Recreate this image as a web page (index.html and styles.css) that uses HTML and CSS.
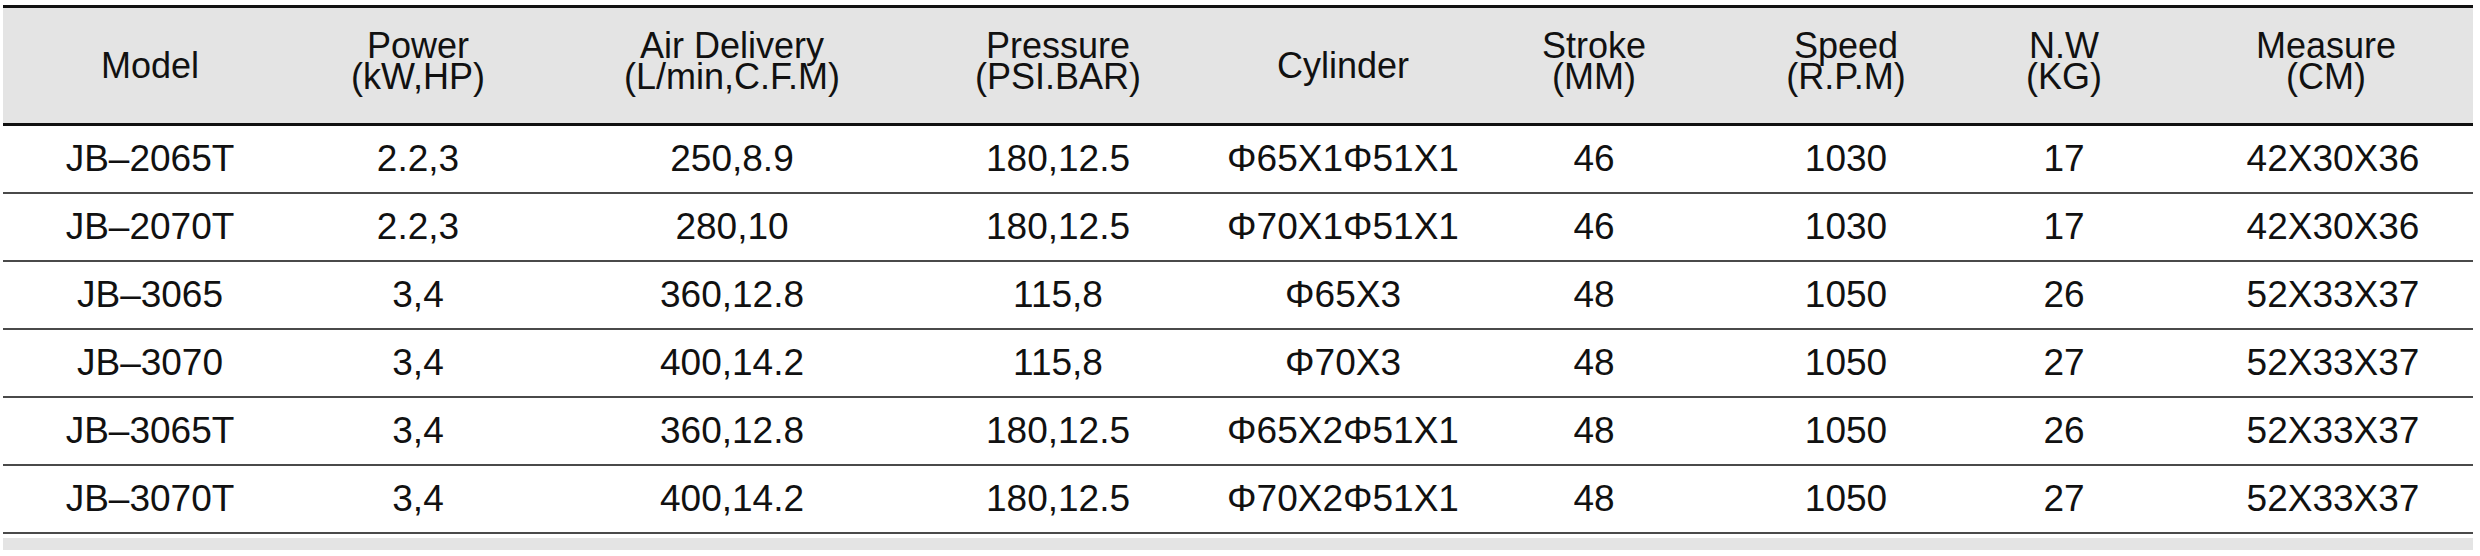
FILE: index.html
```html
<!DOCTYPE html>
<html lang="en">
<head>
<meta charset="utf-8">
<title>Compressor specifications</title>
<link rel="stylesheet" href="styles.css">
</head>
<body>
<div class="sheet">
  <table class="spec">
    <colgroup>
      <col class="c-model"><col class="c-power"><col class="c-air"><col class="c-pres"><col class="c-cyl"><col class="c-stroke"><col class="c-speed"><col class="c-nw"><col class="c-meas">
    </colgroup>
    <thead>
      <tr>
        <th>Model</th>
        <th class="two">Power<br>(kW,HP)</th>
        <th class="two">Air Delivery<br>(L/min,C.F.M)</th>
        <th class="two">Pressure<br>(PSI.BAR)</th>
        <th>Cylinder</th>
        <th class="two">Stroke<br>(MM)</th>
        <th class="two">Speed<br>(R.P.M)</th>
        <th class="two">N.W<br>(KG)</th>
        <th class="two last-h">Measure<br>(CM)</th>
      </tr>
    </thead>
    <tbody>
      <tr><td>JB–2065T</td><td>2.2,3</td><td>250,8.9</td><td>180,12.5</td><td>Φ65X1Φ51X1</td><td>46</td><td>1030</td><td>17</td><td class="last">42X30X36</td></tr>
      <tr><td>JB–2070T</td><td>2.2,3</td><td>280,10</td><td>180,12.5</td><td>Φ70X1Φ51X1</td><td>46</td><td>1030</td><td>17</td><td class="last">42X30X36</td></tr>
      <tr><td>JB–3065</td><td>3,4</td><td>360,12.8</td><td>115,8</td><td>Φ65X3</td><td>48</td><td>1050</td><td>26</td><td class="last">52X33X37</td></tr>
      <tr><td>JB–3070</td><td>3,4</td><td>400,14.2</td><td>115,8</td><td>Φ70X3</td><td>48</td><td>1050</td><td>27</td><td class="last">52X33X37</td></tr>
      <tr><td>JB–3065T</td><td>3,4</td><td>360,12.8</td><td>180,12.5</td><td>Φ65X2Φ51X1</td><td>48</td><td>1050</td><td>26</td><td class="last">52X33X37</td></tr>
      <tr><td>JB–3070T</td><td>3,4</td><td>400,14.2</td><td>180,12.5</td><td>Φ70X2Φ51X1</td><td>48</td><td>1050</td><td>27</td><td class="last">52X33X37</td></tr>
    </tbody>
  </table>
  <div class="next-band"></div>
</div>
</body>
</html>
```
FILE: styles.css
```css
html, body {
  margin: 0;
  padding: 0;
  background: #ffffff;
}

.sheet {
  width: 2470px;
  padding: 5px 0 0 3px;
}

.spec {
  width: 2470px;
  table-layout: fixed;
  border-collapse: collapse;
  font-family: "Liberation Sans", Arial, sans-serif;
  color: #111111;
}

.c-model { width: 294px; }
.c-power { width: 242px; }
.c-air { width: 386px; }
.c-pres { width: 266px; }
.c-cyl { width: 304px; }
.c-stroke { width: 198px; }
.c-speed { width: 306px; }
.c-nw { width: 130px; }
.c-meas { width: 344px; }

.spec thead tr {
  background: #e4e4e4;
  border-top: 3px solid #111111;
  border-bottom: 3px solid #111111;
}

.spec th {
  height: 115px;
  padding: 0;
  font-weight: normal;
  font-size: 36px;
  line-height: 31px;
  text-align: center;
  vertical-align: middle;
}

.spec th.two {
  padding-bottom: 10px;
  height: 105px;
}

.spec td {
  height: 66px;
  padding: 0;
  font-size: 37px;
  line-height: 40px;
  text-align: center;
  vertical-align: middle;
}

.spec .last {
  padding-left: 64px;
}

.spec .last-h {
  padding-left: 50px;
}

.spec tbody tr {
  border-bottom: 2px solid #4a4a4a;
}

.next-band {
  margin-top: 4px;
  height: 12px;
  background: #e4e4e4;
}
```
